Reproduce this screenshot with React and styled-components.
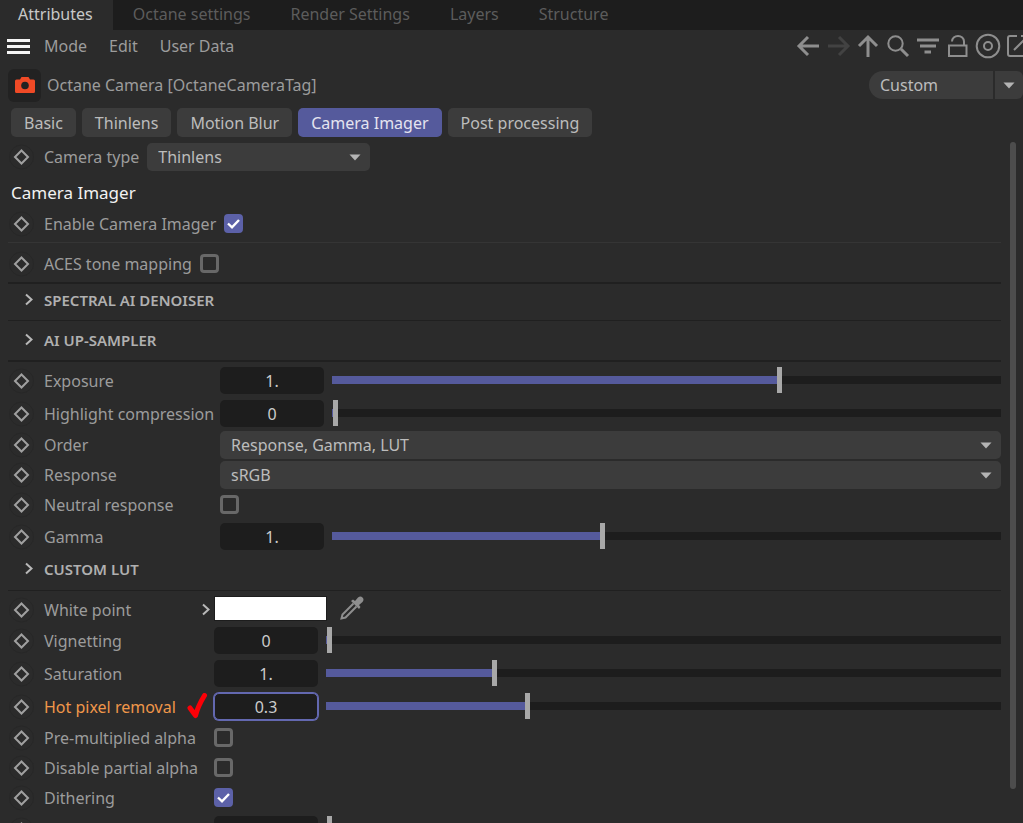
import React from "react";
import styled, { createGlobalStyle, css } from "styled-components";

const c = {
  bg: "#2b2b2b",
  dark: "#1d1d1d",
  control: "#3c3c3c",
  text: "#9c9c9c",
  bright: "#bcbcbc",
  accent: "#555a9c",
};

const Global = createGlobalStyle`
  * { box-sizing: border-box; }
  body { margin: 0; background: ${c.bg}; overflow: hidden; }
  body, button, input, select {
    font-family: "Noto Sans", "Noto Sans CJK KR", sans-serif;
    font-size: 16px;
    line-height: 24px;
  }
`;

const Panel = styled.div`
  display: flex;
  flex-direction: column;
  height: 100vh;
  overflow: hidden;
  color: ${c.text};
  background: ${c.bg};
`;

const TabBar = styled.nav`
  display: flex;
  flex: none;
  height: 30px;
  background: ${c.dark};
`;

const Tab = styled.button`
  border: 0;
  padding: 0 20px 2px;
  background: ${(p) => (p.$active ? c.bg : "transparent")};
  color: ${(p) => (p.$active ? "#c8c8c8" : "#5c5c5c")};
  ${(p) => p.$active && css`padding-left: 18px;`}
`;

const Toolbar = styled.div`
  display: flex;
  flex: none;
  align-items: center;
  height: 34px;
  padding: 0 0 2px 7px;
  overflow: hidden;
`;

const MenuButton = styled.button`
  border: 0;
  padding: 0;
  margin-right: ${(p) => p.$gap || 22}px;
  background: none;
  color: ${c.text};
  white-space: nowrap;
  display: flex;
`;

const Tools = styled.div`
  display: flex;
  flex: none;
  gap: 2px;
  margin-left: auto;
  margin-right: -9px;
`;

const Tool = styled.button`
  display: flex;
  border: 0;
  padding: 0;
  background: none;
  color: ${(p) => (p.disabled ? "#424242" : "#8e8e8e")};
`;

const ObjectBar = styled.header`
  display: flex;
  flex: none;
  align-items: center;
  height: 44px;
  padding: 0 0 2px 8px;
`;

const ObjectIcon = styled.span`
  display: grid;
  place-items: center;
  width: 33px;
  height: 33px;
  margin-right: 6px;
  border-radius: 6px;
  background: #222222;
`;

const ObjectName = styled.h1`
  margin: 0;
  font-size: 16px;
  font-weight: 400;
`;

const SelectBox = styled.span`
  display: grid;
  align-items: center;
  height: 28px;
  width: ${(p) => p.$width || "100%"};
  border-radius: ${(p) => (p.$pill ? "14px 6px 6px 14px" : "5px")};
  background: ${c.control};
  ${(p) => p.$pill && css`margin-left: auto;`}

  > * { grid-area: 1 / 1; }

  select {
    appearance: none;
    width: 100%;
    height: 28px;
    border: 0;
    padding: 0 32px 0 11px;
    background: none;
    color: ${c.bright};
    outline: none;
  }

  > span {
    justify-self: end;
    display: grid;
    place-items: center;
    width: 30px;
    height: 28px;
    pointer-events: none;
    ${(p) => p.$pill && css`border-left: 2px solid ${c.bg};`}
  }
`;

const PageTabs = styled.nav`
  display: flex;
  flex: none;
  gap: 6px;
  padding: 0 11px;
  margin-bottom: 5px;
`;

const PageTab = styled.button`
  height: 29px;
  border: 0;
  padding: 0 13px;
  border-radius: 5px;
  background: ${(p) => (p.$active ? c.accent : c.control)};
  color: ${(p) => (p.$active ? "#e4e4f0" : c.bright)};
  white-space: nowrap;
`;

const Scroller = styled.div`
  display: flex;
  flex: 1;
  min-height: 0;
`;

const Content = styled.main`
  flex: 1;
  min-width: 0;
  padding-left: 8px;
`;

const ScrollTrack = styled.div`
  width: 22px;
  padding-left: 9px;
`;

const ScrollThumb = styled.div`
  width: 6px;
  height: 95%;
  border-radius: 3px;
  background: #4d4d4d;
`;

const Heading = styled.h2`
  margin: 9px 0 4px 3px;
  color: #f2f2f2;
  font-size: 17px;
  font-weight: 400;
  line-height: 24px;
`;

const Rule = styled.hr`
  height: ${(p) => p.$size || 1}px;
  margin: ${(p) => p.$before ?? 3}px 0 ${(p) => p.$after ?? 3}px;
  border: 0;
  background: ${(p) => (p.$light ? "#353535" : "#202020")};
`;

const SectionButton = styled.button`
  display: flex;
  align-items: center;
  width: 100%;
  height: 33px;
  border: 0;
  padding: 0 0 2px 14px;
  background: none;
  color: #b0b0b0;
  font-size: 15px;
  font-weight: 600;

  svg { margin-right: 8px; }
`;

const Row = styled.div`
  display: grid;
  grid-template-columns: 36px ${(p) => (p.$label ? `${p.$label}px` : "auto")} 1fr;
  align-items: center;
  height: ${(p) => (p.$tall ? 33 : 30)}px;
`;

const LabelCell = styled.div`
  display: flex;
  align-items: center;
  justify-content: space-between;
  padding-right: ${(p) => p.$pad || 0}px;
  color: ${(p) => (p.$hot ? "#f0974a" : c.text)};
  white-space: nowrap;
`;

const ControlCell = styled.div`
  display: flex;
  align-items: center;
  gap: 8px;
  min-width: 0;
`;

const NumberField = styled.input`
  flex: none;
  width: 104px;
  height: 27px;
  border: 0;
  padding: 0;
  border-radius: 5px;
  background: ${c.dark};
  color: #cccccc;
  text-align: center;
  outline: none;
  ${(p) => p.$focused && css`
    border: 1px solid #6368b0;
    box-shadow: 0 0 0 1px #6368b0;
  `}
`;

const Slider = styled.input`
  appearance: none;
  flex: 1;
  min-width: 0;
  height: 26px;
  margin: 0 0 2px;
  background: linear-gradient(${c.accent}, ${c.accent}) 0 50% / ${(p) => p.$fill}% 8px no-repeat,
    linear-gradient(${c.dark}, ${c.dark}) 0 50% / 100% 8px no-repeat;

  &::-webkit-slider-thumb {
    appearance: none;
    width: 5px;
    height: 26px;
    background: #a8a8a8;
  }
`;

const CheckBox = styled.span`
  display: grid;
  width: 19px;
  height: 19px;
  margin-bottom: 1px;

  > * { grid-area: 1 / 1; }

  input {
    appearance: none;
    width: 19px;
    height: 19px;
    margin: 0;
    border: 3px solid #686868;
    border-radius: 4px;
  }
  input:checked { border-color: #5c61a8; background: #5c61a8; }
  svg { visibility: hidden; pointer-events: none; }
  input:checked + svg { visibility: visible; }
`;

const Swatch = styled.button`
  width: 113px;
  height: 25px;
  margin: 0 3px 4px 0;
  border: 1px solid #1d1d1d;
  padding: 0;
  background: #ffffff;
`;

const Picker = styled(Tool)`
  margin-bottom: 4px;
`;

const KeyButton = styled.button`
  display: flex;
  border: 0;
  padding: 0;
  background: none;
`;

const Icon = ({ size = 28, w = 2, children }) => (
  <svg width={size} height={size} viewBox={`0 0 ${size} ${size}`} fill="none" stroke="currentColor" strokeWidth={w} aria-hidden="true">
    {children}
  </svg>
);

const Chevron = () => (
  <svg width="14" height="16" viewBox="0 0 14 16" fill="none" stroke="#b8b8b8" strokeWidth="2" aria-hidden="true">
    <path d="M4 2.5 L9.5 7.5 L4 12.5" />
  </svg>
);

const Keyframe = ({ label }) => (
  <KeyButton aria-label={`Animate ${label}`}>
    <svg width="27" height="26" viewBox="0 0 27 26" fill="none" aria-hidden="true">
      <circle cx="13.5" cy="13" r="12" stroke="#272727" />
      <path d="M13.5 6.5 L20 13 L13.5 19.5 L7 13 Z" stroke="#a0a0a0" strokeWidth="2" />
    </svg>
  </KeyButton>
);

const Dropdown = ({ id, value, width, pill, label }) => (
  <SelectBox $width={width} $pill={pill}>
    <select id={id} aria-label={label} defaultValue={value}>
      <option>{value}</option>
    </select>
    <span>
      <svg width="12" height="7" viewBox="0 0 12 7" aria-hidden="true">
        <path d="M0.5 0.5 H11.5 L6 6.5 Z" fill="#b4b4b4" />
      </svg>
    </span>
  </SelectBox>
);

const Check = ({ id, checked }) => (
  <CheckBox>
    <input type="checkbox" id={id} defaultChecked={checked} />
    <svg width="19" height="19" viewBox="0 0 19 19" fill="none" stroke="#ffffff" strokeWidth="2.4" aria-hidden="true">
      <path d="M4 9.5 L8 13.3 L15 6" />
    </svg>
  </CheckBox>
);

const Field = ({ label, col, tall, hot, pad, mark, children }) => {
  const id = label.toLowerCase().replace(/\s+/g, "-");
  return (
    <Row $label={col} $tall={tall}>
      <Keyframe label={label} />
      <LabelCell $hot={hot} $pad={pad}>
        <label htmlFor={id}>{label}</label>
        {mark}
      </LabelCell>
      <ControlCell>{children(id)}</ControlCell>
    </Row>
  );
};

const SliderField = ({ value, fill, focused, ...rest }) => (
  <Field tall {...rest}>
    {(id) => (
      <>
        <NumberField id={id} defaultValue={value} $focused={focused} />
        <Slider type="range" min="0" max="100" step="any" defaultValue={fill} $fill={fill} aria-label={`${rest.label} slider`} />
      </>
    )}
  </Field>
);

const Section = ({ children }) => (
  <SectionButton aria-expanded="false">
    <Chevron />
    {children}
  </SectionButton>
);

const A = 176;
const B = 170;

export default function App() {
  return (
    <Panel>
      <Global />
      <TabBar>
        <Tab $active>Attributes</Tab>
        <Tab>Octane settings</Tab>
        <Tab>Render Settings</Tab>
        <Tab>Layers</Tab>
        <Tab>Structure</Tab>
      </TabBar>

      <Toolbar>
        <MenuButton $gap={14} aria-label="Menu">
          <svg width="23" height="17" viewBox="0 0 23 17" fill="#f4f4f4" aria-hidden="true">
            <path d="M0 1h23v3H0z M0 7h23v3H0z M0 13h23v3H0z" />
          </svg>
        </MenuButton>
        <MenuButton>Mode</MenuButton>
        <MenuButton>Edit</MenuButton>
        <MenuButton>User Data</MenuButton>
        <Tools>
          <Tool aria-label="Back"><Icon w={3}><path d="M25 14 H5 M14 5 L5 14 L14 23" /></Icon></Tool>
          <Tool aria-label="Forward" disabled><Icon w={3}><path d="M4 14 H24 M15 5 L24 14 L15 23" /></Icon></Tool>
          <Tool aria-label="Up"><Icon w={3}><path d="M14 25 V5 M5 14 L14 5 L23 14" /></Icon></Tool>
          <Tool aria-label="Search"><Icon><circle cx="11.5" cy="11.5" r="7.2" /><path d="M17 17 L24 24" strokeWidth="3" /></Icon></Tool>
          <Tool aria-label="Filter"><Icon w={3}><path d="M3 8 H25 M6 14 H22 M10.5 20 H17" /></Icon></Tool>
          <Tool aria-label="Lock"><Icon><path d="M5 13.5 H22.5 V24 H5 Z M8 9.5 A6 5.5 0 0 1 20 9.5 V13" /></Icon></Tool>
          <Tool aria-label="Target"><Icon><circle cx="14" cy="14" r="11.3" /><circle cx="14" cy="14" r="4" /></Icon></Tool>
          <Tool aria-label="New window"><Icon><path d="M13 4 H6 Q4 4 4 6 V22 Q4 24 6 24 H22 Q24 24 24 22 V15 M17 4 H24 V11 M24 4 L10 18" /></Icon></Tool>
        </Tools>
      </Toolbar>

      <ObjectBar>
        <ObjectIcon>
          <svg width="20" height="16" viewBox="0 0 20 16" aria-hidden="true">
            <path d="M1.5 2.5 H5 L6.5 0 H13.5 L15 2.5 H18.5 Q20 2.5 20 4 V14.5 Q20 16 18.5 16 H1.5 Q0 16 0 14.5 V4 Q0 2.5 1.5 2.5 Z" fill="#f04a26" />
            <circle cx="10" cy="8.5" r="3.8" fill="#222222" />
          </svg>
        </ObjectIcon>
        <ObjectName>Octane Camera [OctaneCameraTag]</ObjectName>
        <Dropdown value="Custom" width="154px" pill label="Preset" />
      </ObjectBar>

      <PageTabs>
        <PageTab>Basic</PageTab>
        <PageTab>Thinlens</PageTab>
        <PageTab>Motion Blur</PageTab>
        <PageTab $active>Camera Imager</PageTab>
        <PageTab>Post processing</PageTab>
      </PageTabs>

      <Scroller>
        <Content>
          <Field label="Camera type" pad={8}>{(id) => <Dropdown id={id} value="Thinlens" width="223px" />}</Field>
          <Heading>Camera Imager</Heading>
          <Field label="Enable Camera Imager" pad={8}>{(id) => <Check id={id} checked />}</Field>
          <Rule $light $after={6} />
          <Field label="ACES tone mapping" pad={8}>{(id) => <Check id={id} />}</Field>
          <Rule $size={2} $after={0} />
          <Section>SPECTRAL AI DENOISER</Section>
          <Rule />
          <Section>AI UP-SAMPLER</Section>
          <Rule $size={2} $after={2} />
          <SliderField label="Exposure" col={A} value="1." fill={67} />
          <SliderField label="Highlight compression" col={A} value="0" fill={0.2} />
          <Field label="Order" col={A}>{(id) => <Dropdown id={id} value="Response, Gamma, LUT" />}</Field>
          <Field label="Response" col={A}>{(id) => <Dropdown id={id} value="sRGB" />}</Field>
          <Field label="Neutral response" col={A}>{(id) => <Check id={id} />}</Field>
          <SliderField label="Gamma" col={A} value="1." fill={40.4} />
          <Section>CUSTOM LUT</Section>
          <Rule $before={4} />
          <Field label="White point" col={B} pad={1} mark={<Chevron />}>
            {(id) => (
              <>
                <Swatch id={id} />
                <Picker aria-label="Pick colour">
                  <Icon w={2}>
                    <path d="M15.5 9.5 L4.5 20.5 L3.5 24.5 L7.5 23.5 L18.5 12.5" />
                    <path d="M13 7 L15 5.5 L17 7 L20 3.5 Q22.5 1.5 24.5 3.5 Q26.5 5.5 24.5 8 L21 11 L22.5 13 L21 15 Z" fill="currentColor" stroke="none" />
                  </Icon>
                </Picker>
              </>
            )}
          </Field>
          <SliderField label="Vignetting" col={B} value="0" fill={0.2} />
          <SliderField label="Saturation" col={B} value="1." fill={24.8} />
          <SliderField
            label="Hot pixel removal"
            col={B}
            pad={6}
            value="0.3"
            fill={29.7}
            hot
            focused
            mark={
              <svg width="21" height="28" viewBox="0 0 21 28" fill="none" stroke="#fb0007" strokeLinecap="round" strokeLinejoin="round" aria-hidden="true">
                <path d="M3 15 L8.5 22.5 Q11 13 17.5 2.5" strokeWidth="5" />
              </svg>
            }
          />
          <Field label="Pre-multiplied alpha" col={B}>{(id) => <Check id={id} />}</Field>
          <Field label="Disable partial alpha" col={B}>{(id) => <Check id={id} />}</Field>
          <Field label="Dithering" col={B}>{(id) => <Check id={id} checked />}</Field>
          <SliderField label="Saturate to white" col={B} value="0" fill={0.2} />
        </Content>
        <ScrollTrack>
          <ScrollThumb />
        </ScrollTrack>
      </Scroller>
    </Panel>
  );
}
